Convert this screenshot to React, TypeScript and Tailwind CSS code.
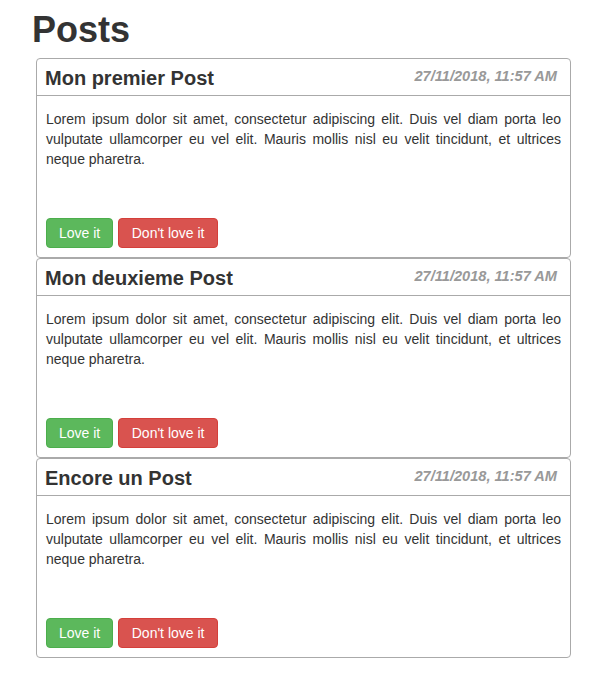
import React from 'react'

const posts = [
  { id: 1, title: 'Mon premier Post', date: '27/11/2018, 11:57 AM' },
  { id: 2, title: 'Mon deuxieme Post', date: '27/11/2018, 11:57 AM' },
  { id: 3, title: 'Encore un Post', date: '27/11/2018, 11:57 AM' },
]

const lorem =
  'Lorem ipsum dolor sit amet, consectetur adipiscing elit. Duis vel diam porta leo vulputate ullamcorper eu vel elit. Mauris mollis nisl eu velit tincidunt, et ultrices neque pharetra.'

function PostCard({ title, date }: { title: string; date: string }) {
  return (
    <div className="flex flex-col h-[200px] w-[535px] border border-[#aaaaaa] rounded-[4px] bg-white">
      <div className="flex items-center justify-between h-[37px] border-b border-[#aaaaaa] pl-[8px] pr-[13px]">
        <h2 className="mt-[2px] text-[20px] leading-[22px] font-bold text-[#333333]">{title}</h2>
        <span className="text-[14.6px] italic font-bold text-[#999999]">{date}</span>
      </div>
      <div className="flex flex-col flex-1 px-[9px] pt-[13px] pb-[9px]">
        <p className="text-[14px] leading-5 text-[#333333] text-justify">{lorem}</p>
        <div className="flex gap-[5px] mt-auto">
          <button className="px-3 py-1 text-[14px] leading-5 text-white bg-[#5cb85c] border border-[#4cae4c] rounded-[4px]">
            Love it
          </button>
          <button className="px-[12.5px] py-1 text-[14px] leading-5 text-white bg-[#d9534f] border border-[#d43f3a] rounded-[4px]">
            Don't love it
          </button>
        </div>
      </div>
    </div>
  )
}

export default function App() {
  return (
    <div className="min-h-screen bg-white pl-[36px] pt-[10px] font-['Liberation_Sans',Arial,sans-serif]">
      <h1 className="-ml-[4px] mb-[8px] text-[36px] leading-[40px] font-bold text-[#333333]">Posts</h1>
      <div className="flex flex-col">
        {posts.map((post) => (
          <PostCard key={post.id} title={post.title} date={post.date} />
        ))}
      </div>
    </div>
  )
}
